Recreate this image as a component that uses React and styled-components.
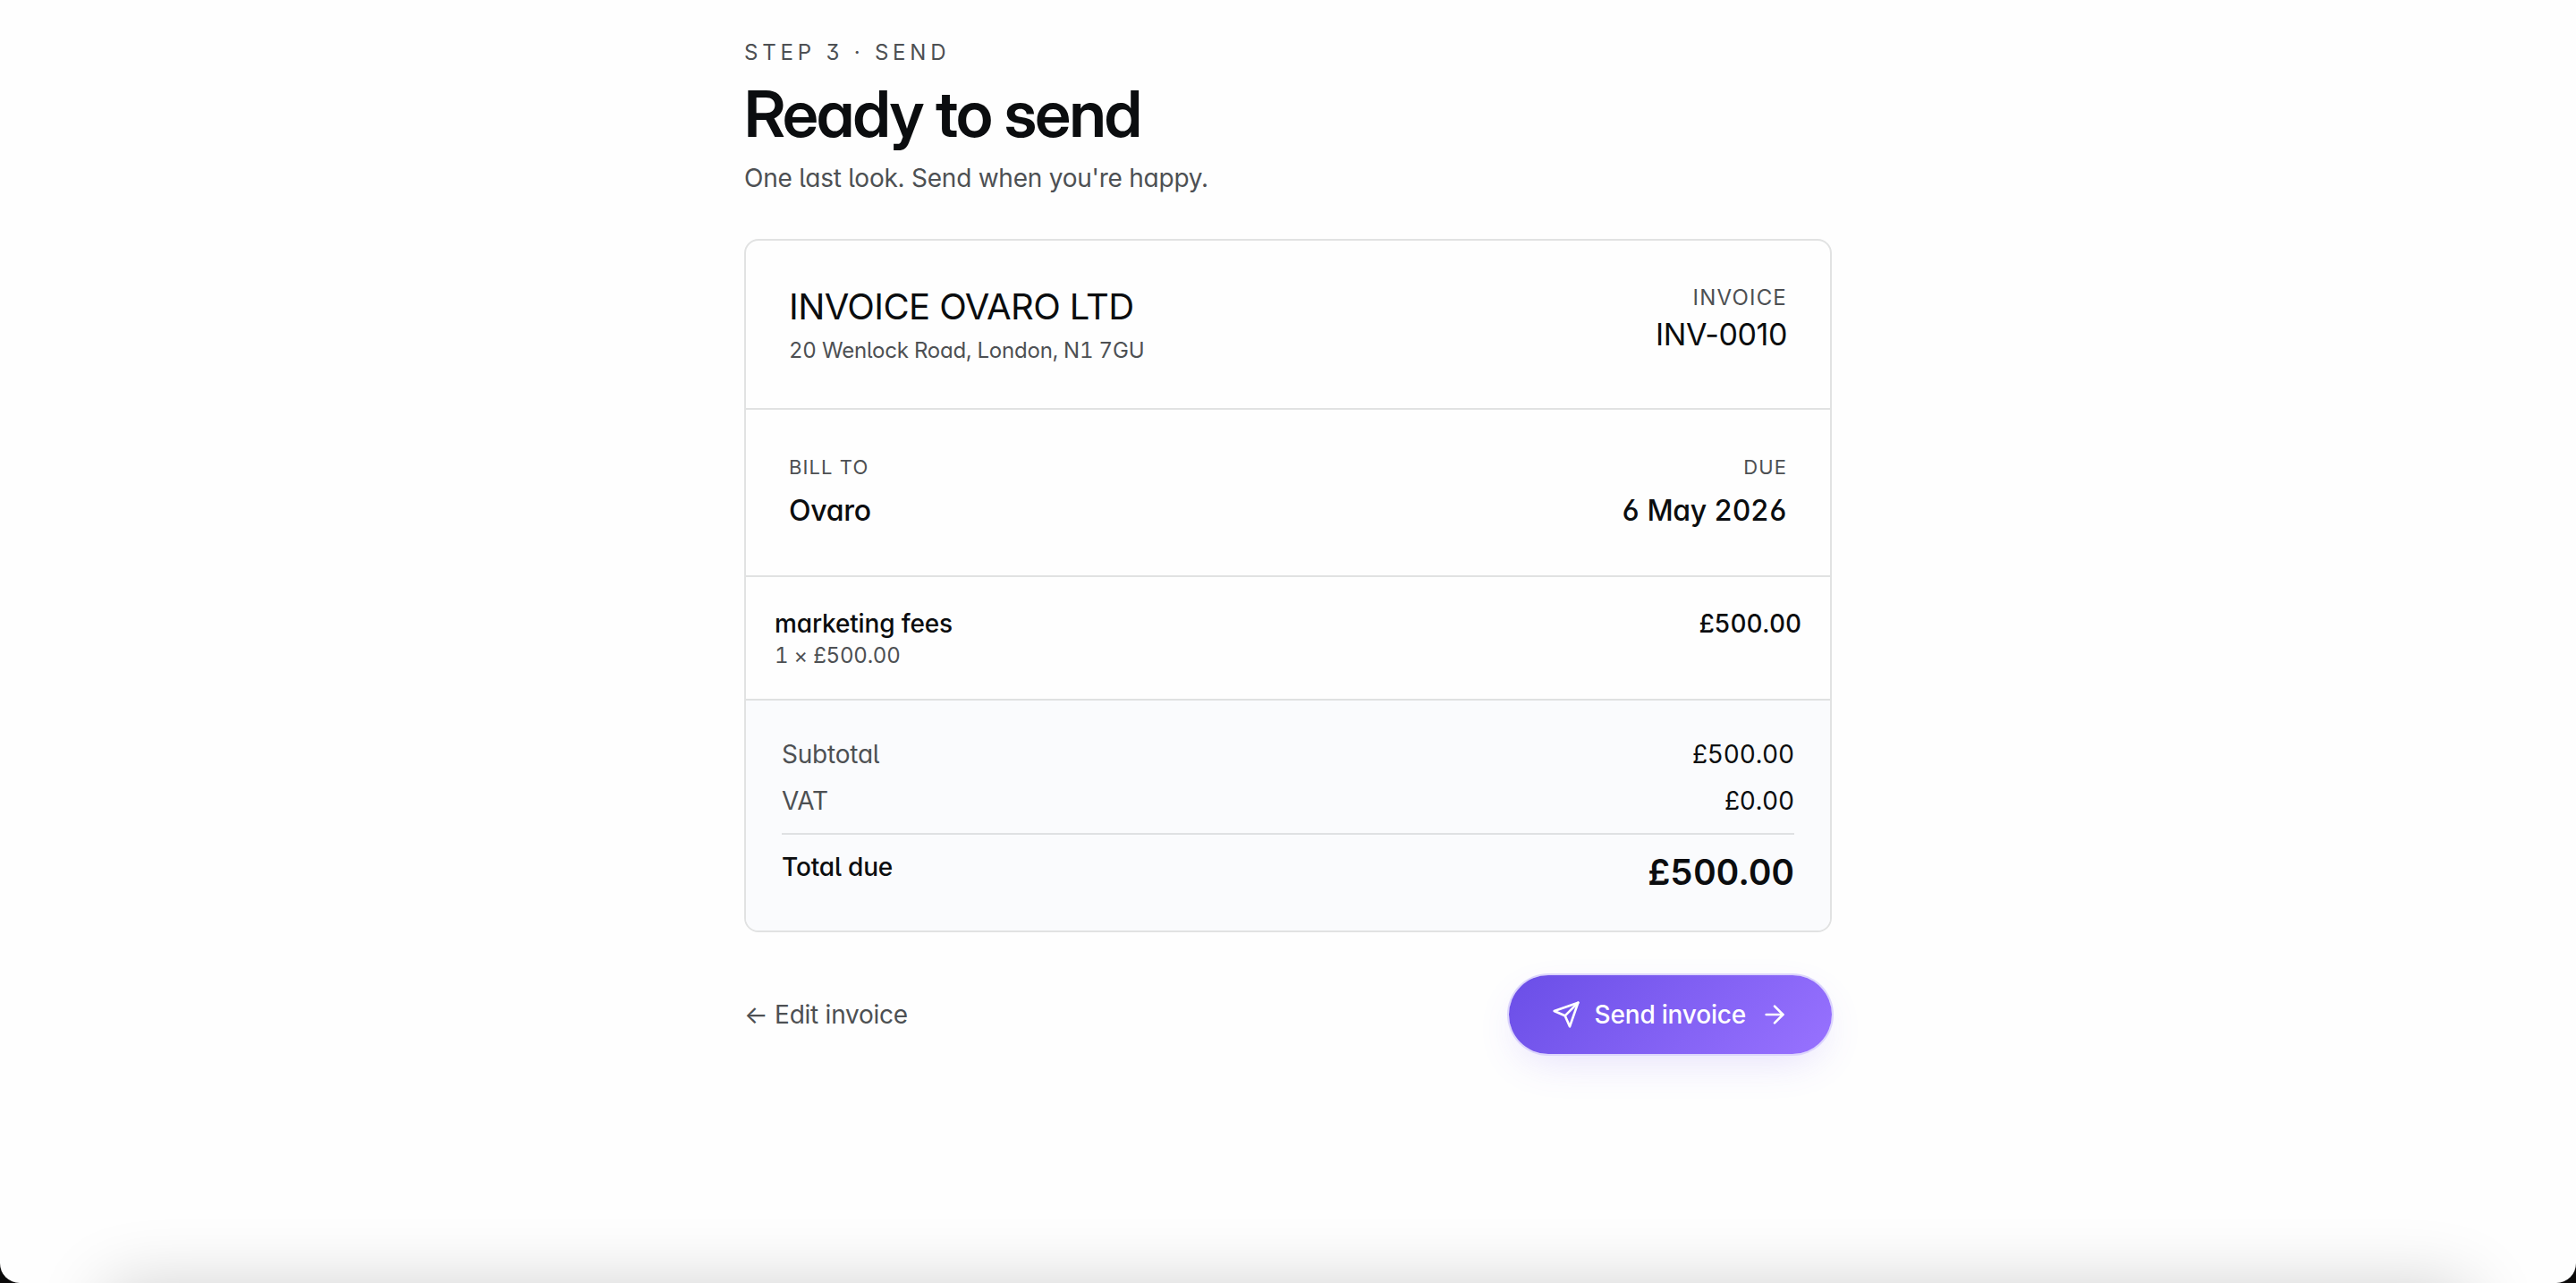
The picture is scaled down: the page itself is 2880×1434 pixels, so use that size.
import React from "react";
import styled, { createGlobalStyle } from "styled-components";

const GlobalStyle = createGlobalStyle`
  *, *::before, *::after { box-sizing: border-box; }
  html, body { margin: 0; background: #0b0a0a; }
  body { font-family: Inter, "Noto Sans", sans-serif; font-feature-settings: "ss01", "cv05", "cv11"; color: #0b0d0f; -webkit-font-smoothing: antialiased; }
  h1, p { margin: 0; }
`;

const Window = styled.div`
  position: relative;
  height: 100vh;
  overflow: hidden;
  border-radius: 0 0 22px 22px;
  background: #fefefe;
`;

const DockShadow = styled.div`
  position: absolute;
  left: 120px;
  right: 120px;
  top: calc(100% + 6px);
  height: 160px;
  box-shadow: 0 0 80px rgba(0, 0, 0, 0.2);
`;

const Column = styled.main`
  width: 1216px;
  margin: 0 auto;
  padding-top: 41px;
`;

const Eyebrow = styled.p`
  font-size: 24px;
  line-height: 36px;
  letter-spacing: 0.2em;
  text-transform: uppercase;
  color: #4d5053;
`;

const Title = styled.h1`
  margin-top: 10px;
  font-family: "Inter Display", Inter, "Noto Sans", sans-serif;
  font-size: 72px;
  line-height: 80px;
  font-weight: 600;
  letter-spacing: -0.0245em;
`;

const Lead = styled.p`
  margin-top: 11px;
  font-size: 28px;
  line-height: 42px;
  letter-spacing: -0.0085em;
  color: #4d5053;
`;

const Card = styled.section`
  margin-top: 47px;
  border: 2px solid #e1e2e2;
  border-radius: 16px;
  overflow: hidden;
`;

const Section = styled.div`
  display: flex;
  justify-content: space-between;
  align-items: flex-start;
  padding: ${(p) => p.$pad}px;
  border-bottom: 2px solid ${(p) => p.$line || "#e1e2e2"};
`;

const Side = styled.div`
  display: flex;
  flex-direction: column;
  align-items: ${(p) => (p.$end ? "flex-end" : "flex-start")};
`;

const Business = styled.div`
  font-size: 40px;
  line-height: 52px;
  letter-spacing: -0.015em;
`;

const Address = styled.div`
  margin-top: 6px;
  font-size: 24px;
  line-height: 33px;
  letter-spacing: -0.0085em;
  font-variant-numeric: tabular-nums;
  color: #4d5053;
`;

const Label = styled.div`
  font-size: ${(p) => p.$size}px;
  line-height: 32px;
  letter-spacing: ${(p) => p.$track}px;
  text-transform: uppercase;
  color: #4d5053;
`;

const Number = styled.div`
  margin-top: 4px;
  font-size: 34px;
  line-height: 42px;
  letter-spacing: -0.012em;
`;

const Party = styled.div`
  margin-top: 8px;
  font-size: 32px;
  line-height: 49px;
  font-weight: 500;
  letter-spacing: -0.009em;
  font-variant-numeric: tabular-nums;
`;

const ItemName = styled.div`
  font-size: 28px;
  line-height: 40px;
  font-weight: 500;
  letter-spacing: -0.005em;
`;

const ItemDetail = styled.div`
  font-size: 24px;
  line-height: 32px;
  letter-spacing: -0.009em;
  font-variant-numeric: tabular-nums;
  color: #4d5053;
`;

const ItemAmount = styled(ItemName)`
  font-variant-numeric: tabular-nums;
`;

const Totals = styled.div`
  display: flex;
  flex-direction: column;
  gap: 12px;
  padding: 40px;
  background: #fafbfd;
`;

const TotalRow = styled.div`
  display: flex;
  justify-content: space-between;
  font-size: 28px;
  line-height: 40px;
`;

const TotalLabel = styled.span`
  letter-spacing: -0.008em;
  color: #4d5053;
`;

const TotalAmount = styled.span`
  letter-spacing: -0.007em;
  font-variant-numeric: tabular-nums;
`;

const DueRow = styled(TotalRow)`
  margin-top: 4px;
  padding-top: 16px;
  border-top: 2px solid #dfe1e3;
`;

const DueLabel = styled.span`
  font-weight: 500;
  letter-spacing: -0.006em;
`;

const DueAmount = styled.span`
  font-size: 40px;
  line-height: 51px;
  font-weight: 600;
  letter-spacing: -0.006em;
  font-variant-numeric: tabular-nums;
`;

const Actions = styled.div`
  display: flex;
  justify-content: space-between;
  align-items: center;
  margin-top: 48px;
`;

const BackButton = styled.button`
  padding: 0;
  border: 0;
  background: none;
  font: 400 28px/42px Inter, "Noto Sans", sans-serif;
  letter-spacing: -0.009em;
  color: #4d5053;
`;

const SendButton = styled.button`
  display: flex;
  align-items: center;
  gap: 16px;
  height: 88px;
  padding: 0 48px;
  border: 0;
  border-radius: 44px;
  background: linear-gradient(135deg, #6a4ee7 0%, #9872ff 100%);
  box-shadow: 0 0 0 2px #dcd5fc, 0 16px 48px -12px rgba(112, 80, 240, 0.2);
  font: 500 28px/42px Inter, "Noto Sans", sans-serif;
  letter-spacing: -0.007em;
  color: #fff;
`;

const Icon = styled.svg`
  width: 32px;
  height: 32px;
  fill: none;
  stroke: currentColor;
  stroke-width: 2;
  stroke-linecap: round;
  stroke-linejoin: round;
`;

const PlaneIcon = () => (
  <Icon viewBox="0 0 24 24">
    <path d="M22 2 15 22l-4-9-9-4Z" />
    <path d="M22 2 11 13" />
  </Icon>
);

const ArrowIcon = () => (
  <Icon viewBox="0 0 24 24">
    <path d="M5 12h14" />
    <path d="m12 5 7 7-7 7" />
  </Icon>
);

export default function App() {
  return (
    <Window>
      <GlobalStyle />
      <Column>
        <Eyebrow>Step 3 · Send</Eyebrow>
        <Title>Ready to send</Title>
        <Lead>One last look. Send when you're happy.</Lead>

        <Card>
          <Section $pad={48}>
            <Side>
              <Business>INVOICE OVARO LTD</Business>
              <Address>20 Wenlock Road, London, N1 7GU</Address>
            </Side>
            <Side $end>
              <Label $size={24} $track={1.2}>Invoice</Label>
              <Number>INV-0010</Number>
            </Side>
          </Section>
          <Section $pad={48}>
            <Side>
              <Label $size={22} $track={1.1}>Bill to</Label>
              <Party>Ovaro</Party>
            </Side>
            <Side $end>
              <Label $size={22} $track={1.1}>Due</Label>
              <Party>6 May 2026</Party>
            </Side>
          </Section>
          <Section $pad={32} $line="#dfe1e1">
            <Side>
              <ItemName>marketing fees</ItemName>
              <ItemDetail>1 × £500.00</ItemDetail>
            </Side>
            <ItemAmount>£500.00</ItemAmount>
          </Section>
          <Totals>
            <TotalRow>
              <TotalLabel>Subtotal</TotalLabel>
              <TotalAmount>£500.00</TotalAmount>
            </TotalRow>
            <TotalRow>
              <TotalLabel>VAT</TotalLabel>
              <TotalAmount>£0.00</TotalAmount>
            </TotalRow>
            <DueRow>
              <DueLabel>Total due</DueLabel>
              <DueAmount>£500.00</DueAmount>
            </DueRow>
          </Totals>
        </Card>

        <Actions>
          <BackButton>← Edit invoice</BackButton>
          <SendButton>
            <PlaneIcon />
            Send invoice
            <ArrowIcon />
          </SendButton>
        </Actions>
      </Column>
      <DockShadow />
    </Window>
  );
}
